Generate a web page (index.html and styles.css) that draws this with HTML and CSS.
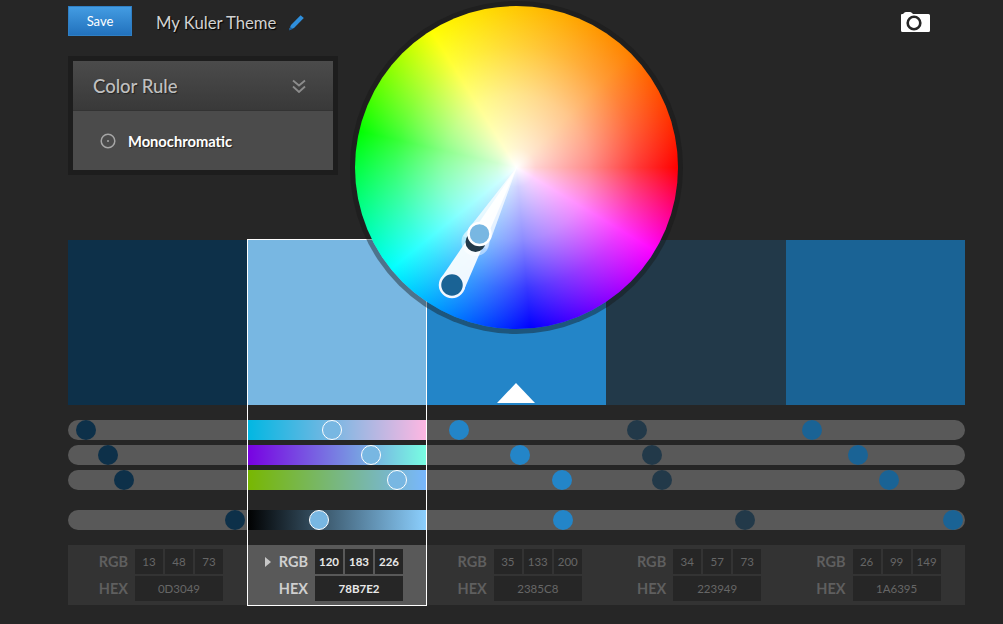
FILE: index.html
```html
<!DOCTYPE html>
<html lang="en">
<head>
<meta charset="utf-8">
<title>My Kuler Theme</title>
<link rel="stylesheet" href="styles.css">
</head>
<body>
<main class="page">
  <header class="topbar">
    <button class="save">Save</button>
    <h1 class="title">My Kuler Theme</h1>
    <svg class="pencil" width="17" height="17" viewBox="0 0 17 17"><path d="M12.6 1.2 15.8 4 6 14 2 15.8 1.2 15.2 3 11Z" fill="#2f8fdc"/><path d="M1 16.4 2.4 12.8 4.6 14.9Z" fill="#1b5f9c"/></svg>
    <svg class="camera" width="29" height="20" viewBox="0 0 29 20"><path d="M1 2H2L3.500 0.500Q4 0 5 0H9Q10 0 11 1L12 2H27.500Q29 2 29 3.500V18.500Q29 20 27.500 20H1.500Q0 20 0 18.500V3Q0 2 1 2Z" fill="#fff"/><circle cx="13" cy="11" r="6.300" fill="none" stroke="#262626" stroke-width="2.600"/></svg>
  </header>

  <section class="rule">
    <div class="rule-head">
      <span class="rule-title">Color Rule</span>
      <svg class="chevrons" width="14" height="14" viewBox="0 0 14 14"><path d="M1 1.500 7 6.500 13 1.500M1 7.500 7 13 13 7.500" fill="none" stroke="#8c8c8c" stroke-width="1.800"/></svg>
    </div>
    <div class="rule-body">
      <svg class="radio" width="16" height="16" viewBox="0 0 16 16"><circle cx="8" cy="8" r="6.800" fill="none" stroke="#a6a6a6" stroke-width="1.500"/><circle cx="8" cy="8" r="1" fill="#a6a6a6"/></svg>
      <span class="rule-name">Monochromatic</span>
    </div>
  </section>

  <section class="board">
    <div class="column">
      <div class="swatch c1"></div>
      <div class="sliders">
        <div class="seg first"><i class="thumb c1" style="left:18px"></i></div>
        <div class="seg first"><i class="thumb c1" style="left:40px"></i></div>
        <div class="seg first"><i class="thumb c1" style="left:56px"></i></div>
        <div class="seg first gap"><i class="thumb c1" style="left:167px"></i></div>
      </div>
      <div class="values">
        <span class="label">RGB</span><span class="cell">13</span><span class="cell">48</span><span class="cell">73</span>
        <span class="label">HEX</span><span class="cell wide">0D3049</span>
      </div>
    </div>

    <div class="column selected">
      <div class="swatch c2"></div>
      <div class="sliders">
        <div class="seg g1"><i class="thumb c2 ring" style="left:84.600px"></i></div>
        <div class="seg g2"><i class="thumb c2 ring" style="left:123.600px"></i></div>
        <div class="seg g3"><i class="thumb c2 ring" style="left:149.600px"></i></div>
        <div class="seg g4 gap"><i class="thumb c2 ring" style="left:71.600px"></i></div>
      </div>
      <div class="values">
        <span class="label"><b class="arrow"></b>RGB</span><span class="cell">120</span><span class="cell">183</span><span class="cell">226</span>
        <span class="label">HEX</span><span class="cell wide">78B7E2</span>
      </div>
    </div>

    <div class="column">
      <div class="swatch c3"><b class="base-mark"></b></div>
      <div class="sliders">
        <div class="seg"><i class="thumb c3" style="left:32.200px"></i></div>
        <div class="seg"><i class="thumb c3" style="left:93.200px"></i></div>
        <div class="seg"><i class="thumb c3" style="left:135.200px"></i></div>
        <div class="seg gap"><i class="thumb c3" style="left:136.200px"></i></div>
      </div>
      <div class="values">
        <span class="label">RGB</span><span class="cell">35</span><span class="cell">133</span><span class="cell">200</span>
        <span class="label">HEX</span><span class="cell wide">2385C8</span>
      </div>
    </div>

    <div class="column">
      <div class="swatch c4"></div>
      <div class="sliders">
        <div class="seg"><i class="thumb c4" style="left:30.800px"></i></div>
        <div class="seg"><i class="thumb c4" style="left:45.800px"></i></div>
        <div class="seg"><i class="thumb c4" style="left:55.800px"></i></div>
        <div class="seg gap"><i class="thumb c4" style="left:138.800px"></i></div>
      </div>
      <div class="values">
        <span class="label">RGB</span><span class="cell">34</span><span class="cell">57</span><span class="cell">73</span>
        <span class="label">HEX</span><span class="cell wide">223949</span>
      </div>
    </div>

    <div class="column">
      <div class="swatch c5"></div>
      <div class="sliders">
        <div class="seg last"><i class="thumb c5" style="left:26.400px"></i></div>
        <div class="seg last"><i class="thumb c5" style="left:72.400px"></i></div>
        <div class="seg last"><i class="thumb c5" style="left:103.400px"></i></div>
        <div class="seg last gap"><i class="thumb c5" style="left:167.400px"></i></div>
      </div>
      <div class="values">
        <span class="label">RGB</span><span class="cell">26</span><span class="cell">99</span><span class="cell">149</span>
        <span class="label">HEX</span><span class="cell wide">1A6395</span>
      </div>
    </div>
  </section>

  <div class="wheel">
    <svg class="handles" width="323" height="323" viewBox="0 0 323 323">
      <polygon points="162,161 108.900,284.150 86.300,271.650" fill="#fff" fill-opacity=".92"/>
      <polygon points="162,161 132,243 108,230" fill="#fff" fill-opacity=".35"/>
      <circle cx="120.500" cy="236" r="14" fill="#fff" fill-opacity=".45"/>
      <circle cx="120.500" cy="236" r="10" fill="#223949"/>
      <polygon points="162,161 136,233 114,222" fill="#fff" fill-opacity=".6"/>
      <circle cx="97" cy="279" r="12" fill="#1a6395" stroke="#f2f7ff" stroke-width="2.500"/>
      <circle cx="124.500" cy="228" r="11" fill="#78b7e2" stroke="#fff" stroke-width="2.500"/>
    </svg>
  </div>
</main>
</body>
</html>
```
FILE: styles.css
```css
* { box-sizing: border-box; }
html, body { margin: 0; height: 100%; }
body {
  background: #262626;
  font-family: "Lato", "Open Sans", sans-serif;
  overflow: hidden;
}
.page { position: relative; width: 897px; margin-left: 68px; }

.topbar { display: flex; align-items: center; height: 56px; padding: 6px 35px 20px 0; }
.save {
  width: 64px; height: 30px; padding: 0;
  font: 13px "Lato", sans-serif; color: #fff;
  background: linear-gradient(#439ce2, #2272bd);
  border: 1px solid #2f7fc4;
}
.title {
  margin: 3px 0 0 24px;
  font-size: 16.700px; font-weight: 400; color: #d2d2d2;
  text-shadow: 1px 1px 1px #000;
}
.pencil { margin-left: 12px; margin-top: 2px; }
.camera { margin-left: auto; margin-top: 2px; }

.rule { width: 270px; height: 119px; border: 5px solid #1d1d1d; background: #4b4b4b; }
.rule-head {
  display: flex; align-items: center; justify-content: space-between;
  height: 50px; padding: 0 27px 0 20px;
  background: linear-gradient(#4b4b4b, #393939);
  border-bottom: 1px solid #333;
}
.rule-title { font-size: 18.500px; font-weight: 500; color: #c0c0c0; text-shadow: 1px 1px 1px #222; }
.rule-body { display: flex; align-items: center; height: 59px; padding-left: 27px; }
.rule-name { margin-left: 12px; font-size: 14.700px; font-weight: 700; color: #fff; text-shadow: 1px 1px 1px #222; }

.board { display: grid; grid-template-columns: repeat(5, 1fr); margin-top: 65px; }
.column { position: relative; }
.selected::after {
  content: ""; position: absolute; inset: -1px 0 -1px 0;
  border: 1px solid #fff; pointer-events: none;
}
.swatch { position: relative; height: 165px; }
.c1 { background: #0d3049; }
.c2 { background: #78b7e2; }
.c3 { background: #2385c8; }
.c4 { background: #223949; }
.c5 { background: #1a6395; }
.base-mark {
  position: absolute; left: 70px; bottom: 2px;
  border-left: 19.500px solid transparent; border-right: 19.500px solid transparent;
  border-bottom: 20px solid #fff;
}

.sliders { display: flex; flex-direction: column; gap: 5px; margin-top: 15px; }
.seg { position: relative; height: 20px; background: #595959; }
.seg.gap { margin-top: 15px; }
.seg.first { border-radius: 10px 0 0 10px; }
.seg.last { border-radius: 0 10px 10px 0; }
.g1 { background: linear-gradient(90deg, #00b7e2, #ffb7e2); }
.g2 { background: linear-gradient(90deg, #7800e2, #78ffe2); }
.g3 { background: linear-gradient(90deg, #78b700, #78b7ff); }
.g4 { background: linear-gradient(90deg, #000, #8cd0ff); }
.thumb {
  position: absolute; top: 0; width: 20px; height: 20px; margin-left: -10px;
  border-radius: 50%;
}
.thumb.ring { border: 1px solid #fff; }

.values {
  display: grid; grid-template-columns: 65px 28px 28px 28px;
  grid-auto-rows: 25px; column-gap: 2px; row-gap: 2px;
  height: 60px; margin-top: 15px; padding-top: 4px;
  background: #333;
}
.label {
  position: relative; padding-right: 5px; text-align: right;
  font-size: 14.500px; font-weight: 700; line-height: 25px; color: #5f5f5f;
}
.cell {
  background: #262626; text-align: center;
  font-size: 11.500px; line-height: 26px; color: #666;
}
.cell.wide { grid-column: span 3; }
.selected .values { background: #595959; grid-template-columns: 65.600px 28px 28px 28px; }
.selected .label { color: #cfcfcf; }
.selected .cell { color: #e8e8e8; font-weight: 700; }
.arrow {
  position: absolute; left: 18px; top: 8px;
  border-top: 5px solid transparent; border-bottom: 5px solid transparent;
  border-left: 6px solid #c8c8c8;
}

.wheel {
  position: absolute; left: 287px; top: 6px;
  width: 323px; height: 323px; border-radius: 50%;
  box-shadow: 0 0 0 5px rgba(22, 22, 22, .42);
  background:
    radial-gradient(circle closest-side, #fff 0, rgba(255,255,255,.82) 12%, rgba(255,255,255,.55) 45%, rgba(255,255,255,.22) 75%, rgba(255,255,255,0) 100%),
    conic-gradient(#ffc800 0deg, #ff8000 45deg, #f00 90deg, #f0f 121deg, #00f 175deg, #0ff 231deg, #0f0 283deg, #ff0 328deg, #ffc800 360deg);
}
.handles { display: block; }
```
